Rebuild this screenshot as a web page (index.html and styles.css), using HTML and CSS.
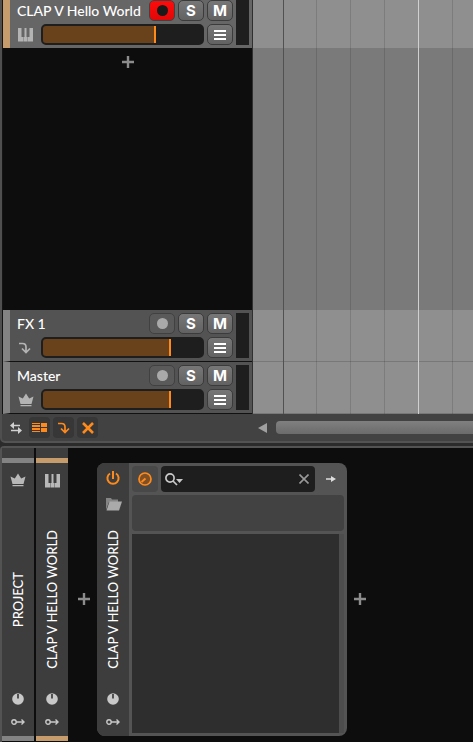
FILE: index.html
```html
<!DOCTYPE html>
<html lang="en">
<head>
<meta charset="utf-8">
<meta name="viewport" content="width=device-width, initial-scale=1">
<title>Arranger</title>
<link rel="stylesheet" href="styles.css">
</head>
<body>
<svg class="defs" aria-hidden="true">
  <symbol id="piano" viewBox="0 0 15 15"><path fill="currentColor" d="M0 1h3.500v9H5v4.500H0zM5.500 14.500V10h1V1h2v9h1v4.500zM11.500 1H15v13.500h-5V10h1.500z"/><path fill="currentColor" opacity=".4" d="M5 10h.5v4.500H5zM9.500 10h.5v4.500h-.5z"/></symbol>
  <symbol id="crown" viewBox="0 0 16 14"><path fill="currentColor" d="M.5 3.500 4.800 5.500 8 .5l3.200 5 4.300-2-2 7.500h-11zM2.500 12h11v1.200h-11z"/></symbol>
  <symbol id="send" viewBox="0 0 14 14"><path fill="none" stroke="currentColor" stroke-width="1.700" d="M1 2.500h3.500Q8 2.500 8 6v5.500M4 7.500l4 4 4-4"/></symbol>
  <symbol id="menu" viewBox="0 0 12 12"><path fill="currentColor" d="M0 1h12v2H0zM0 5h12v2H0zM0 9h12v2H0z"/></symbol>
  <symbol id="plus" viewBox="0 0 12 12"><path fill="none" stroke="currentColor" stroke-width="2.400" d="M6 0v12M0 6h12"/></symbol>
  <symbol id="knob" viewBox="0 0 12 12"><circle cx="6" cy="6" r="5.800" fill="currentColor"/><path stroke="#333" stroke-width="1.600" d="M6 1v4.500"/></symbol>
  <symbol id="link" viewBox="0 0 14 8"><g fill="none" stroke="currentColor" stroke-width="1.400"><circle cx="3" cy="4" r="2.200"/><path d="M5 4h8M10.500 1.500 13 4l-2.500 2.500"/></g></symbol>
</svg>

<main class="arranger">
  <section class="tracks" aria-label="Tracks">
    <article class="track selected">
      <div class="body">
        <div class="row">
          <h2>CLAP V Hello World</h2>
          <button class="btn rec armed" aria-label="Record arm"></button>
          <button class="btn" aria-label="Solo">S</button>
          <button class="btn" aria-label="Mute">M</button>
        </div>
        <div class="row">
          <span class="kind"><svg width="15" height="15"><use href="#piano"/></svg></span>
          <input class="volume" type="range" aria-label="CLAP V Hello World volume" min="0" max="100" value="71" style="--v:71%">
          <button class="btn" aria-label="Track menu"><svg width="12" height="12"><use href="#menu"/></svg></button>
        </div>
      </div>
      <div class="meter"></div>
    </article>
    <div class="empty"><button class="add" aria-label="Add track"><svg width="12" height="12"><use href="#plus"/></svg></button></div>
    <article class="track">
      <div class="body">
        <div class="row">
          <h2>FX 1</h2>
          <button class="btn rec" aria-label="Record arm"></button>
          <button class="btn" aria-label="Solo">S</button>
          <button class="btn" aria-label="Mute">M</button>
        </div>
        <div class="row">
          <span class="kind"><svg width="14" height="14"><use href="#send"/></svg></span>
          <input class="volume" type="range" aria-label="FX 1 volume" min="0" max="100" value="80" style="--v:80%">
          <button class="btn" aria-label="Track menu"><svg width="12" height="12"><use href="#menu"/></svg></button>
        </div>
      </div>
      <div class="meter"></div>
    </article>
    <article class="track">
      <div class="body">
        <div class="row">
          <h2>Master</h2>
          <button class="btn rec" aria-label="Record arm"></button>
          <button class="btn" aria-label="Solo">S</button>
          <button class="btn" aria-label="Mute">M</button>
        </div>
        <div class="row">
          <span class="kind"><svg width="16" height="14"><use href="#crown"/></svg></span>
          <input class="volume" type="range" aria-label="Master volume" min="0" max="100" value="80" style="--v:80%">
          <button class="btn" aria-label="Track menu"><svg width="12" height="12"><use href="#menu"/></svg></button>
        </div>
      </div>
      <div class="meter"></div>
    </article>
  </section>
  <section class="timeline" aria-label="Timeline">
    <div class="lane first"></div>
    <div class="lane blank"></div>
    <div class="lane"></div>
    <div class="lane"></div>
    <div class="playhead"></div>
  </section>
</main>

<footer class="toolbar">
  <div class="tools">
    <button class="tool" aria-label="Swap"><svg width="14" height="12" viewBox="0 0 14 12"><path fill="currentColor" d="M1 3.500 5 0v2.800h6v1.400H5V7zM13 8.500 9 5v2.800H2v1.400h7V12z"/></svg></button>
    <button class="tool on" aria-label="Track list"><svg width="15" height="11" viewBox="0 0 15 11"><path fill="currentColor" d="M0 1h8v1H0zM0 3h8v2H0zM0 6h8v2H0zM0 9h8v1H0zM9 1h6v4H9zM9 6h6v4H9z"/></svg></button>
    <button class="tool on" aria-label="Effect tracks"><svg width="14" height="14"><use href="#send"/></svg></button>
    <button class="tool on" aria-label="Crossfade"><svg width="12" height="12" viewBox="0 0 12 12"><path stroke="currentColor" stroke-width="2.600" d="m1 1 10 10M11 1 1 11"/></svg></button>
  </div>
  <div class="scroll">
    <button class="prev" aria-label="Scroll left"><svg width="9" height="10" viewBox="0 0 9 10"><path fill="currentColor" d="M9 0v10L0 5z"/></svg></button>
    <div class="bar"></div>
  </div>
</footer>

<section class="devices" aria-label="Devices">
  <div class="strip">
    <svg class="top" width="16" height="14"><use href="#crown"/></svg>
    <span class="label">PROJECT</span>
    <div class="foot"><svg width="12" height="12"><use href="#knob"/></svg><svg width="14" height="8"><use href="#link"/></svg></div>
  </div>
  <div class="strip tan">
    <svg class="top" width="15" height="15"><use href="#piano"/></svg>
    <span class="label">CLAP V HELLO WORLD</span>
    <div class="foot"><svg width="12" height="12"><use href="#knob"/></svg><svg width="14" height="8"><use href="#link"/></svg></div>
  </div>
  <button class="add side" aria-label="Add device before"><svg width="12" height="12"><use href="#plus"/></svg></button>
  <article class="device">
    <div class="rail">
      <div class="head">
        <button class="power" aria-label="Power"><svg width="14" height="15" viewBox="0 0 14 15"><path fill="none" stroke="currentColor" stroke-width="2" d="M7 0v8M4 2.500a5.600 5.600 0 1 0 6 0"/></svg></button>
        <button class="folder" aria-label="Browse presets"><svg width="17" height="13" viewBox="0 0 17 13"><path fill="#858585" d="M1 0h5l1 1.500h6V4H4L1 12z"/><path fill="#aaa" d="M4.500 3.500H17L14 12.500H1.500z"/></svg></button>
      </div>
      <span class="label">CLAP V HELLO WORLD</span>
      <div class="foot"><svg width="12" height="12"><use href="#knob"/></svg><svg width="14" height="8"><use href="#link"/></svg></div>
    </div>
    <div class="panel">
      <div class="bartop">
        <button class="remote" aria-label="Remote controls"><svg width="14" height="14" viewBox="0 0 14 14"><g fill="none" stroke="currentColor"><circle cx="7" cy="7" r="6" stroke-width="1.700" fill="#805024"/><path stroke-width="1.900" d="M7.500 6.500 3.500 10"/></g></svg></button>
        <div class="search">
          <svg width="18" height="13" viewBox="0 0 18 13"><g fill="none" stroke="currentColor" stroke-width="1.700"><circle cx="5" cy="5" r="4.100"/><path d="m8 8 4 4"/></g><path fill="currentColor" d="M11 6h7l-3.500 4z"/></svg>
          <input type="text" aria-label="Search parameters">
          <button aria-label="Clear"><svg width="10" height="10" viewBox="0 0 10 10"><path stroke="currentColor" stroke-width="1.600" d="m.5.500 9 9M9.500.500l-9 9"/></svg></button>
        </div>
        <button class="next" aria-label="Next"><svg width="10" height="6" viewBox="0 0 10 6"><path fill="currentColor" d="M0 2.300h5V0l5 3-5 3V3.700H0z"/></svg></button>
      </div>
      <div class="pages"></div>
      <div class="params"></div>
    </div>
  </article>
  <button class="add side after" aria-label="Add device after"><svg width="12" height="12"><use href="#plus"/></svg></button>
</section>
</body>
</html>
```
FILE: styles.css
```css
* { box-sizing: border-box; }
body {
  margin: 0;
  min-height: 100vh;
  display: flex;
  flex-direction: column;
  background: #2b2b2b;
  color: #fff;
  font-family: Lato, sans-serif;
  overflow-x: hidden;
}
svg { display: block; flex: none; }
.defs { position: absolute; width: 0; height: 0; }
button {
  display: flex;
  align-items: center;
  justify-content: center;
  padding: 0;
  border: 0;
  background: none;
  color: inherit;
  font: inherit;
}

.arranger {
  flex: 1;
  display: flex;
  border-left: 2px solid #4f4f4f;
}
.tracks {
  width: 251px;
  flex: none;
  display: flex;
  flex-direction: column;
  background: #0d0d0d;
  border-left: 1px solid #141414;
  border-right: 1px solid #303030;
}
.track {
  display: flex;
  height: 52px;
  padding: 3px;
  background: #535353;
  border-left: 7px solid #838383;
  border-bottom: 1px solid #111;
}
.track.selected {
  height: 48px;
  padding-top: 0;
  background: #666;
  border-left-color: #c69c6c;
  border-bottom: 0;
}
.body {
  flex: 1;
  display: flex;
  flex-direction: column;
  gap: 3px;
}
.row {
  display: flex;
  align-items: center;
  gap: 3px;
  height: 21px;
}
h2 {
  flex: 1;
  margin: 0;
  padding-left: 4px;
  font-size: 14px;
  line-height: 20px;
  font-weight: 500;
  white-space: nowrap;
}
.btn {
  width: 26px;
  height: 21px;
  flex: none;
  border: 1px solid #3b3b3b;
  border-radius: 5px;
  background: linear-gradient(#777, #626262);
  font: 700 15px/19px Inter, sans-serif;
}
.rec { background: #5a5a5a; border-color: #414141; }
.rec::before {
  content: "";
  width: 11px;
  height: 11px;
  border-radius: 50%;
  background: #aaa;
}
.rec.armed { background: linear-gradient(#ff0b0b, #e00808); }
.rec.armed::before { background: #1a1a1a; }
.kind {
  width: 25px;
  display: flex;
  padding-left: 5px;
  color: #b4b4b4;
}
.volume {
  -webkit-appearance: none;
  appearance: none;
  flex: 1;
  min-width: 0;
  height: 21px;
  margin: 0;
  border: 2px solid #1e1e1e;
  border-radius: 5px;
  background: linear-gradient(90deg, #69421b var(--v), #1e1e1e var(--v));
}
.volume::-webkit-slider-thumb {
  -webkit-appearance: none;
  width: 2px;
  height: 17px;
  background: #ff8a1c;
}
.meter {
  width: 13px;
  margin-left: 3px;
  background: #1e1e1e;
}
.empty {
  flex: 1;
  display: flex;
  justify-content: center;
  align-items: flex-start;
  padding-top: 8px;
}
.add { color: #8c8c8c; }

.timeline {
  position: relative;
  flex: 1;
  display: flex;
  flex-direction: column;
  overflow: hidden;
}
.lane {
  height: 52px;
  background: #8f8f8f;
  border-bottom: 1px solid #787878;
}
.lane.first { height: 48px; border: 0; }
.lane.blank {
  flex: 1;
  border: 0;
  background: #7a7a7a;
}
.timeline::before,
.timeline::after,
.playhead {
  content: "";
  position: absolute;
  top: 0;
  bottom: 0;
}
.timeline::before {
  left: 30px;
  width: 1px;
  background: #515151;
}
.timeline::after {
  left: 63px;
  right: 0;
  background: repeating-linear-gradient(90deg, rgba(0, 0, 0, .13) 0 1px, transparent 1px 34px);
}
.playhead {
  left: 165px;
  width: 1px;
  background: #d0d0d0;
  z-index: 1;
}

.toolbar {
  display: flex;
  height: 29px;
  margin-bottom: 3px;
  background: #424242;
  border-left: 2px solid #4f4f4f;
  border-bottom: 2px solid #535353;
  border-bottom-left-radius: 5px;
}
.tools {
  width: 251px;
  flex: none;
  display: flex;
  align-items: center;
  gap: 3px;
  padding-left: 3px;
}
.tool {
  width: 21px;
  height: 21px;
  border-radius: 4px;
  color: #d0d0d0;
}
.tool.on { background: #373737; color: #ff8a1c; }
.scroll {
  flex: 1;
  display: flex;
  align-items: center;
  gap: 9px;
  padding-left: 5px;
}
.prev { color: #a0a0a0; }
.bar {
  flex: 1;
  height: 13px;
  border-radius: 4px 0 0 4px;
  background: linear-gradient(#808080, #6b6b6b);
}

.devices {
  display: flex;
  height: 296px;
  padding-bottom: 1px;
  background: #0d0d0d;
  border: solid #535353;
  border-width: 2px 0 0 2px;
  border-top-left-radius: 4px;
}
.strip,
.rail {
  display: grid;
  grid-template-rows: 1fr auto 1fr;
  justify-items: center;
  width: 32px;
  flex: none;
  background: #3d3d3d;
  color: #b8b8b8;
}
.strip {
  position: relative;
  margin-right: 2px;
  padding-top: 15px;
  border-bottom: 5px solid #838383;
}
.strip::before {
  content: "";
  position: absolute;
  top: 10px;
  left: 0;
  right: 0;
  height: 5px;
  background: #838383;
}
.strip.tan { margin-right: 0; border-color: #c69c6c; }
.strip.tan::before { background: #c69c6c; }
.strip .top { margin-top: 10px; }
.label {
  writing-mode: vertical-rl;
  transform: rotate(180deg);
  color: #fff;
  font-size: 13px;
  font-weight: 500;
  line-height: 16px;
  white-space: nowrap;
}
.foot {
  align-self: end;
  display: flex;
  flex-direction: column;
  align-items: center;
  gap: 13px;
  padding-bottom: 10px;
  color: #c8c8c8;
}
.add.side {
  width: 29px;
  margin-top: 14px;
  margin-bottom: 6px;
  padding-left: 3px;
}
.add.side.after { width: 26px; padding-left: 0; }
.device {
  display: flex;
  flex: 0 0 250px;
  margin: 15px 0 5px;
  border-radius: 8px;
  background: #545454;
  overflow: hidden;
}
.head {
  display: flex;
  flex-direction: column;
  align-items: center;
  gap: 12px;
  padding-top: 8px;
}
.power { color: #ff8a1c; }
.panel {
  flex: 1;
  min-width: 0;
  display: flex;
  flex-direction: column;
  gap: 3px;
  padding: 3px;
}
.bartop { display: flex; gap: 3px; height: 26px; }
.remote {
  width: 26px;
  flex: none;
  border-radius: 4px;
  background: #484848;
  color: #ff8a1c;
}
.search {
  flex: 1;
  min-width: 0;
  display: flex;
  align-items: center;
  padding: 0 6px 0 4px;
  border-radius: 4px;
  background: #1e1e1e;
  color: #c8c8c8;
}
.search input {
  flex: 1;
  min-width: 0;
  border: 0;
  padding: 0 4px;
  background: none;
  color: #fff;
  font: 13px Lato, sans-serif;
}
.search button { color: #999; }
.next { width: 26px; flex: none; color: #ddd; }
.pages {
  height: 36px;
  border-radius: 4px;
  background: #424242;
}
.params {
  flex: 1;
  background: #2e2e2e;
  border-right: 5px solid #4d4d4d;
}
```
